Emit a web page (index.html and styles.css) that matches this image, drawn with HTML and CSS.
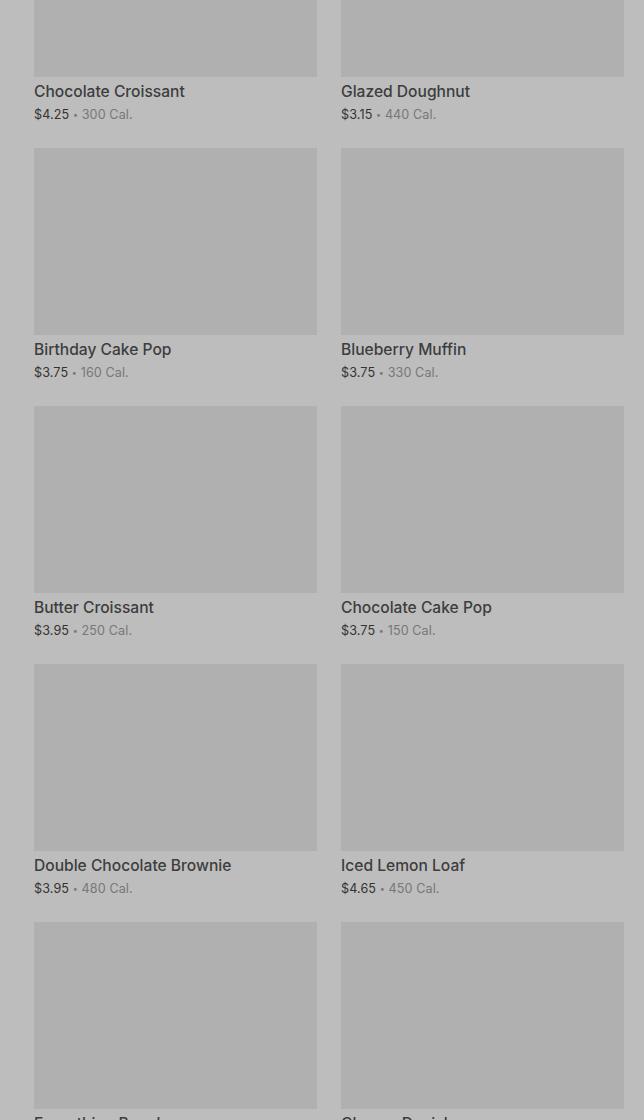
FILE: index.html
```html
<!DOCTYPE html>
<html>
<head>
<meta charset="utf-8">
<link rel="stylesheet" href="styles.css">
</head>
<body>
<div class="grid">
  <div class="card"><div class="img"></div><div class="name">Chocolate Croissant</div><div class="meta"><span class="price">$4.25</span> <span class="dot">•</span> 300 Cal.</div></div>
  <div class="card"><div class="img"></div><div class="name">Glazed Doughnut</div><div class="meta"><span class="price">$3.15</span> <span class="dot">•</span> 440 Cal.</div></div>
  <div class="card"><div class="img"></div><div class="name">Birthday Cake Pop</div><div class="meta"><span class="price">$3.75</span> <span class="dot">•</span> 160 Cal.</div></div>
  <div class="card"><div class="img"></div><div class="name">Blueberry Muffin</div><div class="meta"><span class="price">$3.75</span> <span class="dot">•</span> 330 Cal.</div></div>
  <div class="card"><div class="img"></div><div class="name">Butter Croissant</div><div class="meta"><span class="price">$3.95</span> <span class="dot">•</span> 250 Cal.</div></div>
  <div class="card"><div class="img"></div><div class="name">Chocolate Cake Pop</div><div class="meta"><span class="price">$3.75</span> <span class="dot">•</span> 150 Cal.</div></div>
  <div class="card"><div class="img"></div><div class="name">Double Chocolate Brownie</div><div class="meta"><span class="price">$3.95</span> <span class="dot">•</span> 480 Cal.</div></div>
  <div class="card"><div class="img"></div><div class="name">Iced Lemon Loaf</div><div class="meta"><span class="price">$4.65</span> <span class="dot">•</span> 450 Cal.</div></div>
  <div class="card"><div class="img"></div><div class="name">Everything Bagel</div><div class="meta"><span class="price">$2.95</span> <span class="dot">•</span> 290 Cal.</div></div>
  <div class="card"><div class="img"></div><div class="name">Cheese Danish</div><div class="meta"><span class="price">$3.45</span> <span class="dot">•</span> 290 Cal.</div></div>
</div>
</body>
</html>
```
FILE: styles.css
```css
html, body {
  margin: 0;
  padding: 0;
  background: #bdbdbd;
  overflow: hidden;
  height: 1120px;
}
body {
  font-family: Inter, Roboto, "Liberation Sans", sans-serif;
}
.grid {
  display: grid;
  grid-template-columns: 283px 283px;
  column-gap: 24px;
  row-gap: 24px;
  padding-left: 34px;
  margin-top: -110px;
}
.card {
  display: flex;
  flex-direction: column;
}
.img {
  height: 187px;
  background: #b0b0b0;
}
.name {
  margin-top: 4px;
  font-size: 15.6px;
  line-height: 22px;
  font-weight: 500;
  color: #3d3d3d;
}
.meta {
  font-size: 12.6px;
  line-height: 19px;
  color: #777777;
  margin-top: 2px;
  letter-spacing: 0.1px;
}
.dot {
  font-size: 9px;
  vertical-align: 1px;
}
.price {
  color: #333333;
}
```
